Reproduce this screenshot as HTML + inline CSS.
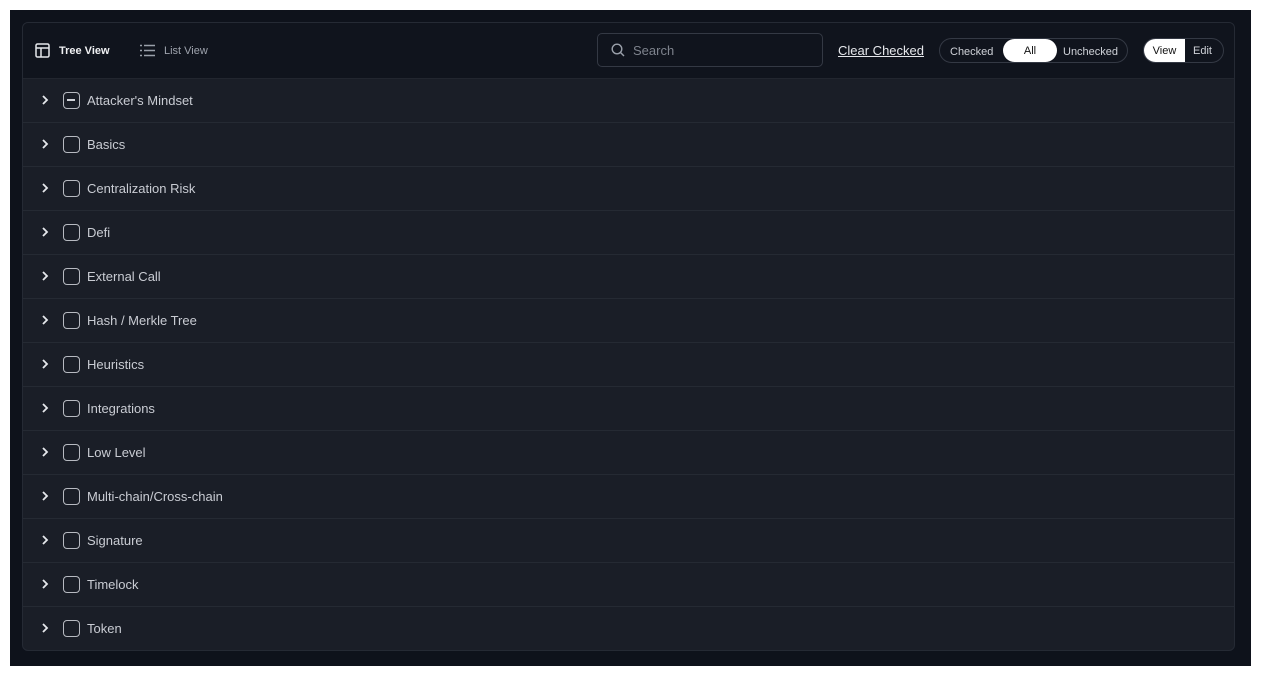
<!DOCTYPE html>
<html><head><style>
*{box-sizing:border-box;margin:0;padding:0}
body{width:1261px;height:677px;background:#fff;font-family:"Liberation Sans",sans-serif;position:relative;overflow:hidden}
.outer{position:absolute;left:10px;top:10px;width:1241px;height:656px;background:#0e121b}
.panel{position:absolute;left:22px;top:22px;width:1213px;height:629px;border:1px solid #252a34;border-radius:6px;background:#1a1e27;overflow:hidden}
.hdr{height:56px;background:#10141d;border-bottom:1px solid #22262f;position:relative}
.row{height:44px;border-bottom:1px solid #252a33;position:relative;color:#c9ccd3;font-size:13px}
.row .chev{position:absolute;left:17px;top:15px}
.row .cb{position:absolute;left:40px;top:13px;width:17px;height:17px;border:1.5px solid #b7bac1;border-radius:4px}
.row .t{position:absolute;left:64px;top:14px}
.abs{position:absolute}
</style></head><body>
<div class="outer"></div>
<div class="panel">
<div class="hdr">
 <svg class="abs" style="left:12px;top:20px" width="15" height="15" viewBox="0 0 15 15" fill="none" stroke="#e6e8ec" stroke-width="1.5"><rect x="1" y="1" width="13" height="13" rx="1.5"/><path d="M1 5h13M6 5v9"/></svg>
 <div class="abs" style="left:36px;top:22px;color:#f0f1f3;font-size:11px;font-weight:bold">Tree View</div>
 <svg class="abs" style="left:117px;top:21px" width="15" height="13" viewBox="0 0 15 13" stroke="#9aa0aa" stroke-width="1.5"><path d="M0 1.5h2M4 1.5h11M0 6.5h2M4 6.5h11M0 11.5h2M4 11.5h11"/></svg>
 <div class="abs" style="left:141px;top:22px;color:#9ea3ad;font-size:11px">List View</div>
 <div class="abs" style="left:574px;top:10px;width:226px;height:34px;border:1px solid #343944;border-radius:5px"></div>
 <svg class="abs" style="left:588px;top:20px" width="14" height="14" viewBox="0 0 14 14" fill="none" stroke="#9aa0aa" stroke-width="1.4"><circle cx="6" cy="6" r="4.8"/><path d="M9.5 9.5L13 13"/></svg>
 <div class="abs" style="left:610px;top:20px;color:#7e838d;font-size:13px">Search</div>
 <div class="abs" style="left:815px;top:20px;color:#e6e8ec;font-size:13px;text-decoration:underline">Clear Checked</div>
 <div class="abs" style="left:916px;top:15px;width:189px;height:25px;border:1px solid #343944;border-radius:13px"></div>
 <div class="abs" style="left:927px;top:23px;color:#cfd2d8;font-size:11px">Checked</div>
 <div class="abs" style="left:980px;top:16px;width:54px;height:23px;background:#fff;border-radius:12px;color:#111;font-size:11px;text-align:center;line-height:25px">All</div>
 <div class="abs" style="left:1040px;top:23px;color:#cfd2d8;font-size:11px">Unchecked</div>
 <div class="abs" style="left:1120px;top:15px;width:81px;height:25px;border:1px solid #343944;border-radius:13px"></div>
 <div class="abs" style="left:1121px;top:16px;width:41px;height:23px;background:#fff;border-radius:12px 0 0 12px;color:#111;font-size:11px;text-align:center;line-height:24px">View</div>
 <div class="abs" style="left:1170px;top:22px;color:#cfd2d8;font-size:11px">Edit</div>
</div>
<div class="row"><svg class="chev" width="10" height="12" viewBox="0 0 10 12" fill="none" stroke="#e6e8ec" stroke-width="1.8"><path d="M3 2l4 4-4 4"/></svg><div class="cb"><div style="position:absolute;left:3px;top:6px;width:8px;height:1.5px;background:#d0d3d9"></div></div><div class="t">Attacker's Mindset</div></div>
<div class="row"><svg class="chev" width="10" height="12" viewBox="0 0 10 12" fill="none" stroke="#e6e8ec" stroke-width="1.8"><path d="M3 2l4 4-4 4"/></svg><div class="cb"></div><div class="t">Basics</div></div>
<div class="row"><svg class="chev" width="10" height="12" viewBox="0 0 10 12" fill="none" stroke="#e6e8ec" stroke-width="1.8"><path d="M3 2l4 4-4 4"/></svg><div class="cb"></div><div class="t">Centralization Risk</div></div>
<div class="row"><svg class="chev" width="10" height="12" viewBox="0 0 10 12" fill="none" stroke="#e6e8ec" stroke-width="1.8"><path d="M3 2l4 4-4 4"/></svg><div class="cb"></div><div class="t">Defi</div></div>
<div class="row"><svg class="chev" width="10" height="12" viewBox="0 0 10 12" fill="none" stroke="#e6e8ec" stroke-width="1.8"><path d="M3 2l4 4-4 4"/></svg><div class="cb"></div><div class="t">External Call</div></div>
<div class="row"><svg class="chev" width="10" height="12" viewBox="0 0 10 12" fill="none" stroke="#e6e8ec" stroke-width="1.8"><path d="M3 2l4 4-4 4"/></svg><div class="cb"></div><div class="t">Hash / Merkle Tree</div></div>
<div class="row"><svg class="chev" width="10" height="12" viewBox="0 0 10 12" fill="none" stroke="#e6e8ec" stroke-width="1.8"><path d="M3 2l4 4-4 4"/></svg><div class="cb"></div><div class="t">Heuristics</div></div>
<div class="row"><svg class="chev" width="10" height="12" viewBox="0 0 10 12" fill="none" stroke="#e6e8ec" stroke-width="1.8"><path d="M3 2l4 4-4 4"/></svg><div class="cb"></div><div class="t">Integrations</div></div>
<div class="row"><svg class="chev" width="10" height="12" viewBox="0 0 10 12" fill="none" stroke="#e6e8ec" stroke-width="1.8"><path d="M3 2l4 4-4 4"/></svg><div class="cb"></div><div class="t">Low Level</div></div>
<div class="row"><svg class="chev" width="10" height="12" viewBox="0 0 10 12" fill="none" stroke="#e6e8ec" stroke-width="1.8"><path d="M3 2l4 4-4 4"/></svg><div class="cb"></div><div class="t">Multi-chain/Cross-chain</div></div>
<div class="row"><svg class="chev" width="10" height="12" viewBox="0 0 10 12" fill="none" stroke="#e6e8ec" stroke-width="1.8"><path d="M3 2l4 4-4 4"/></svg><div class="cb"></div><div class="t">Signature</div></div>
<div class="row"><svg class="chev" width="10" height="12" viewBox="0 0 10 12" fill="none" stroke="#e6e8ec" stroke-width="1.8"><path d="M3 2l4 4-4 4"/></svg><div class="cb"></div><div class="t">Timelock</div></div>
<div class="row" style="border-bottom:none"><svg class="chev" width="10" height="12" viewBox="0 0 10 12" fill="none" stroke="#e6e8ec" stroke-width="1.8"><path d="M3 2l4 4-4 4"/></svg><div class="cb"></div><div class="t">Token</div></div>
</div>
</body></html>
